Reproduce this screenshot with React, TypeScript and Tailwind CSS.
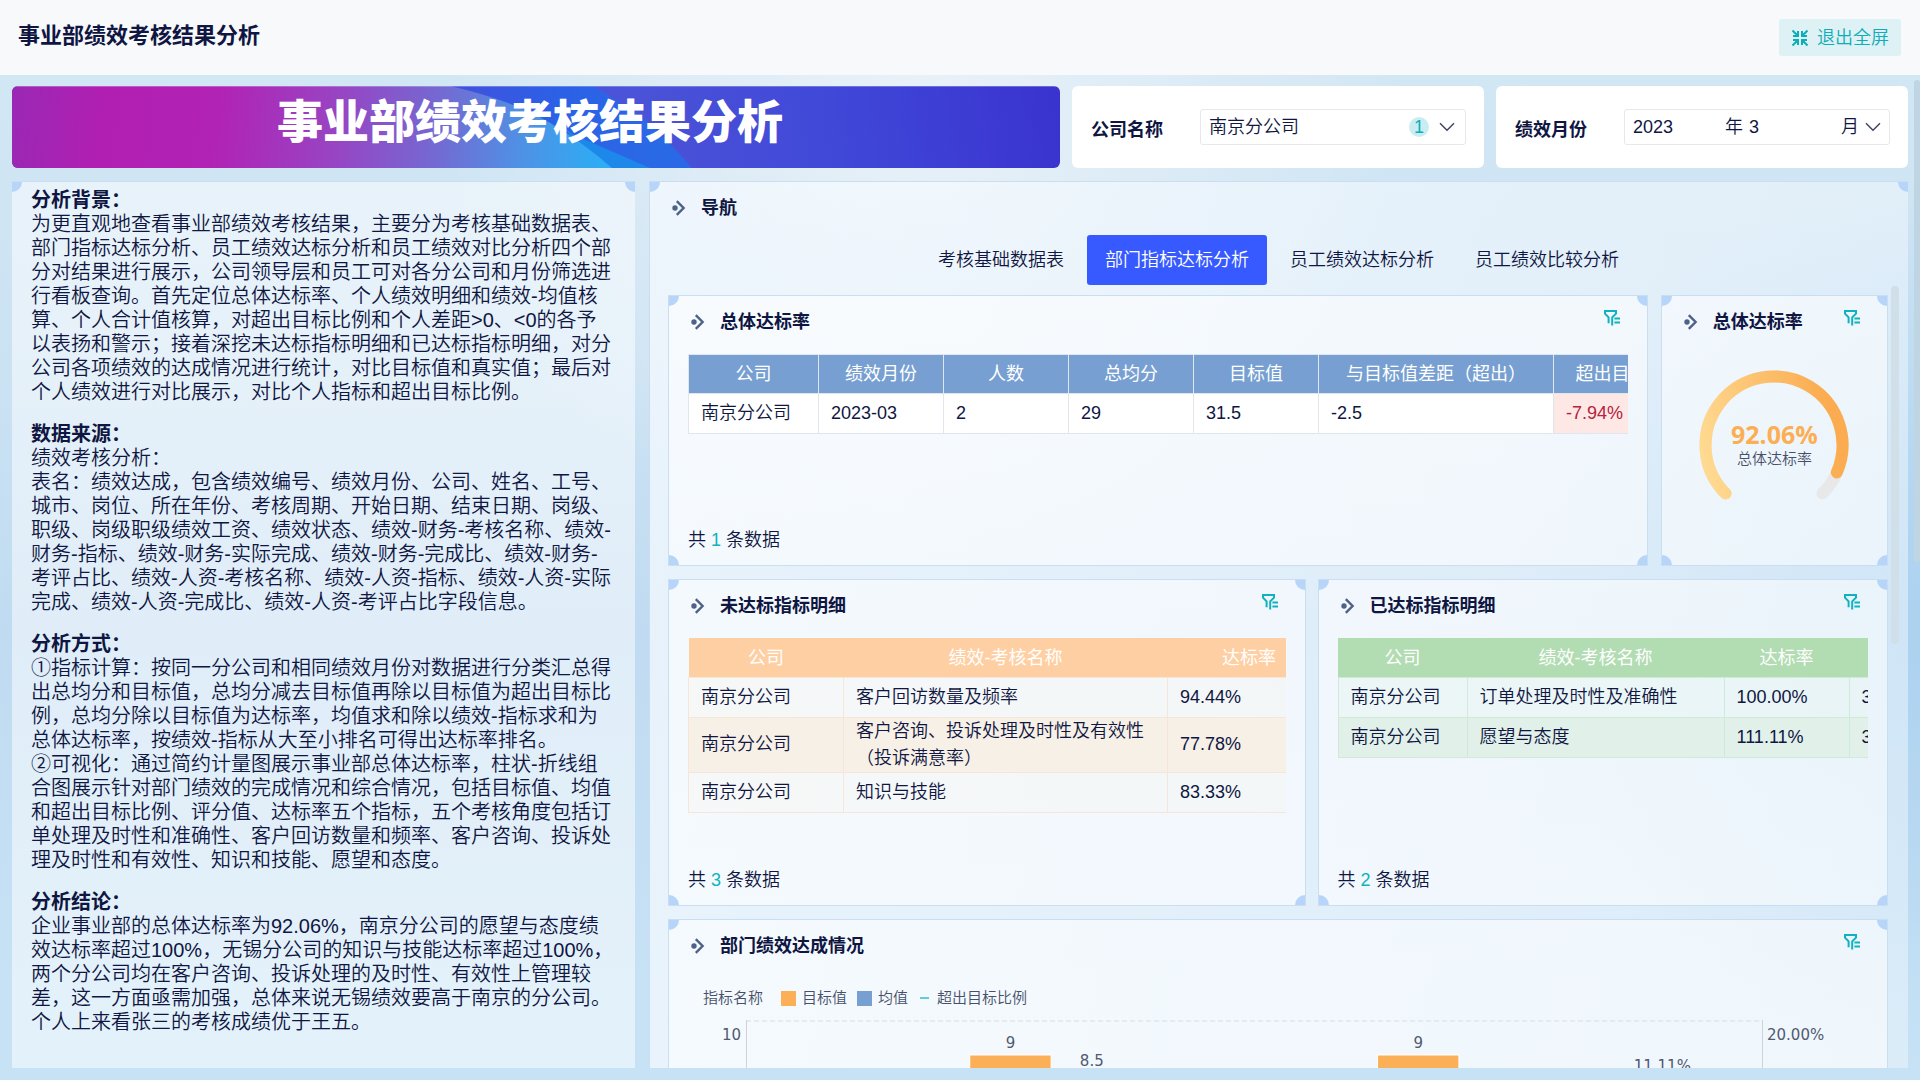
import type { ReactNode } from 'react'
import { clsx } from 'clsx'

interface CardProps {
  title?: string
  filter?: boolean
  className?: string
  children: ReactNode
}

interface ArticleSection {
  heading: string
  lines: string[]
}

const sections: ArticleSection[] = [
  {
    heading: '分析背景：',
    lines: [
      '为更直观地查看事业部绩效考核结果，主要分为考核基础数据表、部门指标达标分析、员工绩效达标分析和员工绩效对比分析四个部分对结果进行展示，公司领导层和员工可对各分公司和月份筛选进行看板查询。首先定位总体达标率、个人绩效明细和绩效-均值核算、个人合计值核算，对超出目标比例和个人差距>0、<0的各予以表扬和警示；接着深挖未达标指标明细和已达标指标明细，对分公司各项绩效的达成情况进行统计，对比目标值和真实值；最后对个人绩效进行对比展示，对比个人指标和超出目标比例。'
    ]
  },
  {
    heading: '数据来源：',
    lines: [
      '绩效考核分析：',
      '表名：绩效达成，包含绩效编号、绩效月份、公司、姓名、工号、城市、岗位、所在年份、考核周期、开始日期、结束日期、岗级、职级、岗级职级绩效工资、绩效状态、绩效-财务-考核名称、绩效-财务-指标、绩效-财务-实际完成、绩效-财务-完成比、绩效-财务-考评占比、绩效-人资-考核名称、绩效-人资-指标、绩效-人资-实际完成、绩效-人资-完成比、绩效-人资-考评占比字段信息。'
    ]
  },
  {
    heading: '分析方式：',
    lines: [
      '①指标计算：按同一分公司和相同绩效月份对数据进行分类汇总得出总均分和目标值，总均分减去目标值再除以目标值为超出目标比例，总均分除以目标值为达标率，均值求和除以绩效-指标求和为总体达标率，按绩效-指标从大至小排名可得出达标率排名。',
      '②可视化：通过简约计量图展示事业部总体达标率，柱状-折线组合图展示针对部门绩效的完成情况和综合情况，包括目标值、均值和超出目标比例、评分值、达标率五个指标，五个考核角度包括订单处理及时性和准确性、客户回访数量和频率、客户咨询、投诉处理及时性和有效性、知识和技能、愿望和态度。'
    ]
  },
  {
    heading: '分析结论：',
    lines: [
      '企业事业部的总体达标率为92.06%，南京分公司的愿望与态度绩效达标率超过100%，无锡分公司的知识与技能达标率超过100%，两个分公司均在客户咨询、投诉处理的及时性、有效性上管理较差，这一方面亟需加强，总体来说无锡绩效要高于南京的分公司。个人上来看张三的考核成绩优于王五。'
    ]
  }
]

const tabs = ['考核基础数据表', '部门指标达标分析', '员工绩效达标分析', '员工绩效比较分析']

function ExitIcon() {
  return (
    <svg className="h-[18px] w-[18px]" viewBox="0 0 18 18" fill="none" stroke="currentColor" strokeWidth="2">
      <path d="M1.5 1.5l4.5 4.5M2 7h5V2M16.5 1.5L12 6M11 2v5h5M1.5 16.5L6 12M2 11h5v5M16.5 16.5L12 12M11 16v-5h5" />
    </svg>
  )
}

function ArrowIcon() {
  return (
    <svg className="h-4 w-[14px] shrink-0" viewBox="0 0 14 16">
      <circle cx="3" cy="8" r="2.7" fill="#4e6288" />
      <path d="M4.8 1.2L11.6 8l-6.8 6.8" fill="none" stroke="#4e6288" strokeWidth="2.4" />
    </svg>
  )
}

function FilterIcon() {
  return (
    <svg className="h-4 w-4" viewBox="0 0 16 16" fill="none" stroke="#0fb2be" strokeWidth="2">
      <path d="M4.6 13.2V7.4L1 3.6V1h11v2.6L8.2 7.4V15.4" />
      <path d="M10.4 8.6H16M10.4 12.4H16" />
    </svg>
  )
}

function ChevronIcon() {
  return (
    <svg className="pointer-events-none h-[10px] w-4 shrink-0" viewBox="0 0 16 10" fill="none" stroke="#3b4160" strokeWidth="1.4">
      <path d="M1 1.2l7 7 7-7" />
    </svg>
  )
}

function Corners({ bottom = true }: { bottom?: boolean }) {
  return (
    <>
      <i className="absolute left-0 top-0 h-[10px] w-[10px] rounded-br-full bg-[#b7d5f8]" />
      <i className="absolute right-0 top-0 h-[10px] w-[10px] rounded-bl-full bg-[#b7d5f8]" />
      {bottom && (
        <>
          <i className="absolute bottom-0 left-0 h-[10px] w-[10px] rounded-tr-full bg-[#b7d5f8]" />
          <i className="absolute bottom-0 right-0 h-[10px] w-[10px] rounded-tl-full bg-[#b7d5f8]" />
        </>
      )}
    </>
  )
}

function Card({ title, filter = true, className, children }: CardProps) {
  return (
    <section className={clsx('relative flex min-w-0 flex-col border border-[#c9def3] bg-white/55 px-[19px]', className)}>
      <Corners />
      <div className="flex h-[52px] shrink-0 items-center gap-[15px] pl-[3px]">
        <ArrowIcon />
        <h3 className="text-lg font-bold">{title}</h3>
        {filter && (
          <button className="ml-auto mr-2 pb-2" aria-label="筛选">
            <FilterIcon />
          </button>
        )}
      </div>
      {children}
    </section>
  )
}

function Total({ count }: { count: number }) {
  return (
    <p className="mt-auto pb-3 text-lg leading-[26px]">
      共 <span className="text-[#0fb2be]">{count}</span> 条数据
    </p>
  )
}

interface DataTableProps {
  head: string[]
  widths: string[]
  rows: string[][]
  headClass: string
  cellClass: string
  stripeClass?: string
}

function DataTable({ head, widths, rows, headClass, cellClass, stripeClass }: DataTableProps) {
  return (
    <div className="mt-[6px] overflow-hidden">
      <table className="w-max table-fixed border-collapse text-lg leading-[27px]">
        <thead>
          <tr>
            {head.map((name, i) => (
              <th key={name} className={clsx('h-[39px] font-normal text-white', widths[i], headClass)}>
                {name}
              </th>
            ))}
          </tr>
        </thead>
        <tbody>
          {rows.map((row, r) => (
            <tr key={row[1]} className={clsx(r % 2 === 1 && stripeClass)}>
              {row.map((cell, i) => (
                <td
                  key={i}
                  className={clsx(
                    'h-10 border px-3',
                    cell === '-7.94%' ? 'border-[#e1e6ec] bg-[#fee8e6] text-[#b3233b]' : cellClass
                  )}
                >
                  {cell.split('\n').map(line => (
                    <span key={line} className="block whitespace-nowrap">{line}</span>
                  ))}
                </td>
              ))}
            </tr>
          ))}
        </tbody>
      </table>
    </div>
  )
}

function Gauge({ value, label }: { value: number; label: string }) {
  const r = 68.5
  const point = (deg: number) => {
    const a = (deg * Math.PI) / 180
    return `${75 + r * Math.cos(a)} ${75 + r * Math.sin(a)}`
  }
  const end = 135 + 2.7 * value

  return (
    <div className="relative mx-auto mt-[22px] h-[150px] w-[150px]">
      <svg viewBox="0 0 150 150" fill="none" strokeWidth="12" strokeLinecap="round">
        <defs>
          <linearGradient id="gauge" x1="0" y1="1" x2="1" y2="0.8">
            <stop offset="0" stopColor="#ffdc94" />
            <stop offset="1" stopColor="#fbac50" />
          </linearGradient>
        </defs>
        <path d={`M${point(135)}A${r} ${r} 0 1 1 ${point(405)}`} stroke="#e8e8e8" />
        <path d={`M${point(135)}A${r} ${r} 0 1 1 ${point(end)}`} stroke="url(#gauge)" />
      </svg>
      <div className="absolute inset-0 flex flex-col items-center pt-[50px]">
        <strong className="font-['Open_Sans',sans-serif] text-[25px] font-bold leading-7 text-[#fcae55]">{value}%</strong>
        <span className="text-[15px] leading-[22px] text-[#47506a]">{label}</span>
      </div>
    </div>
  )
}

function Chart() {
  return (
    <div className="flex h-[300px] pl-[2px] pr-[19px] font-['DejaVu_Sans','Noto_Sans_CJK_SC',sans-serif] text-[15px] font-normal text-[#515970]">
      <span className="w-14 pr-[5px] pt-1 text-right">10</span>
      <svg className="h-full min-w-0 flex-1" fill="#515970" textAnchor="middle">
        <line x1="0" x2="100%" y1="1" y2="1" stroke="#d9dde2" strokeWidth="1" strokeDasharray="5 3" />
        <line x1="0" x2="0" y1="0" y2="100%" stroke="#cfd3d9" strokeWidth="2" />
        <line x1="100%" x2="100%" y1="0" y2="100%" stroke="#cfd3d9" strokeWidth="2" />
        <rect x="22%" y="35" width="8%" height="265" fill="#fbaf57" stroke="#fff" />
        <rect x="62.1%" y="35" width="8%" height="265" fill="#fbaf57" stroke="#fff" />
        <text x="26%" y="28">9</text>
        <text x="34%" y="46">8.5</text>
        <text x="66.1%" y="28">9</text>
        <text x="90.1%" y="51">11.11%</text>
      </svg>
      <span className="w-[86px] pl-1 pt-1">20.00%</span>
    </div>
  )
}

function Banner() {
  return (
    <div className="relative min-w-0 overflow-hidden rounded-md">
      <svg className="absolute inset-0 h-full w-full" viewBox="0 0 1048 82" preserveAspectRatio="none">
        <defs>
          <linearGradient id="base" gradientUnits="userSpaceOnUse" x1="480" y1="82" x2="1048" y2="0">
            <stop offset="0" stopColor="#4557d8" />
            <stop offset="0.25" stopColor="#4b53d8" />
            <stop offset="0.6" stopColor="#4048d8" />
            <stop offset="1" stopColor="#3a33cf" />
          </linearGradient>
          <linearGradient id="glow" gradientUnits="userSpaceOnUse" x1="0" y1="0" x2="590" y2="60">
            <stop offset="0" stopColor="#9a28b4" />
            <stop offset="0.16" stopColor="#b11fb2" />
            <stop offset="0.35" stopColor="#b123b4" />
            <stop offset="0.55" stopColor="#9844c3" />
            <stop offset="0.72" stopColor="#7469d2" />
            <stop offset="0.86" stopColor="#5090e4" />
            <stop offset="1" stopColor="#2eacf4" />
          </linearGradient>
          <linearGradient id="band" gradientUnits="userSpaceOnUse" x1="438" y1="0" x2="640" y2="60">
            <stop offset="0" stopColor="#4350dc" />
            <stop offset="0.5" stopColor="#2c60e6" />
            <stop offset="1" stopColor="#2a69e6" />
          </linearGradient>
        </defs>
        <rect width="1048" height="82" fill="url(#base)" />
        <path d="M438 0H581L622 25Q650 47 680 82H590Z" fill="url(#band)" />
        <path d="M540 30L560 48L638 82L735 82H590Z" fill="#1e88ea" />
        <path d="M0 0H438Q500 14 540 38Q570 56 600 82H0Z" fill="url(#glow)" />
        <path d="M0 0.5H1048" stroke="#fff" strokeOpacity="0.25" />
      </svg>
      <h2 className="relative truncate pr-3 pt-[5px] text-center text-[46px] font-black leading-[62px] text-white">
        事业部绩效考核结果分析
      </h2>
    </div>
  )
}

function Filters() {
  return (
    <>
      <div className="flex min-w-0 items-center rounded-md bg-white pl-[19px] pr-[18px]">
        <label htmlFor="company" className="w-[109px] shrink-0 pt-[6px] text-lg font-bold">公司名称</label>
        <div className="relative flex h-9 min-w-0 flex-1 items-center rounded-[3px] border border-[#e6e8ec] pr-[10px]">
          <select id="company" className="h-full w-full appearance-none bg-transparent pl-2 text-lg outline-none">
            <option>南京分公司</option>
          </select>
          <span className="mr-[10px] flex h-5 w-5 shrink-0 items-center justify-center rounded-full bg-[#c9edf0] text-lg leading-5 text-[#0fadb9]">
            1
          </span>
          <ChevronIcon />
        </div>
      </div>
      <div className="flex min-w-0 items-center rounded-md bg-white pl-[19px] pr-[18px]">
        <label htmlFor="year" className="w-[109px] shrink-0 pt-[6px] text-lg font-bold">绩效月份</label>
        <div className="flex h-9 min-w-0 flex-1 items-center rounded-[3px] border border-[#e6e8ec] px-2 text-lg">
          <input id="year" defaultValue="2023" className="w-0 flex-1 bg-transparent outline-none" />
          <span>年</span>
          <input aria-label="月" defaultValue="3" className="w-0 flex-1 bg-transparent pl-[6px] outline-none" />
          <span className="mr-[6px]">月</span>
          <ChevronIcon />
        </div>
      </div>
    </>
  )
}

export default function App() {
  return (
    <div className="flex h-screen flex-col overflow-hidden font-['Liberation_Sans','Noto_Sans_CJK_SC',sans-serif] font-[350] text-[#0f1642]">
      <header className="flex h-[75px] shrink-0 items-start justify-between bg-[#f8f9fb] pl-[18px] pr-[19px] pt-[19px]">
        <h1 className="text-[22px] font-bold leading-[34px]">事业部绩效考核结果分析</h1>
        <button className="flex h-[37px] items-center gap-2 rounded-[3px] bg-[#def1f4] px-3 text-lg text-[#0fadb9]">
          <ExitIcon />
          退出全屏
        </button>
      </header>

      <main className="relative flex min-h-0 flex-1 flex-col gap-[13px] bg-[radial-gradient(circle_at_48%_2%,#e9f1f8_0%,transparent_34%),radial-gradient(circle_at_100%_55%,#acd2f0_0%,transparent_22%),linear-gradient(180deg,#d2e7f4_0%,#cbe2f3_30%,#c0dbf1_55%,#c7e2f5_90%)] px-3 pb-3 pt-[11px]">
        <span className="absolute right-0 top-[5px] h-[48%] w-[6px] rounded bg-[#bfd5e4]" />
        <div className="grid min-h-[82px] grid-cols-[1048fr_412fr_412fr] gap-3">
          <Banner />
          <Filters />
        </div>

        <div className="grid min-h-0 flex-1 grid-cols-[623fr_1259fr] gap-[14px]">
          <article className="relative overflow-hidden border-t border-[#c9def3] bg-white/50 pl-[19px] pr-5 pt-[6px] text-xl leading-6">
            <Corners bottom={false} />
            {sections.map(section => (
              <section key={section.heading} className="mb-[18px]">
                <h3 className="font-bold">{section.heading}</h3>
                {section.lines.map(line => (
                  <p key={line}>{line}</p>
                ))}
              </section>
            ))}
          </article>

          <section className="relative flex min-w-0 flex-col overflow-hidden border-l border-t border-[#c9def3] bg-[linear-gradient(100deg,rgb(245_250_255/0.75),rgb(240_247_253/0.5))] pl-[18px]">
            <Corners bottom={false} />
            <div className="flex h-[53px] shrink-0 items-center gap-[15px] pb-[2px] pl-1">
              <ArrowIcon />
              <h3 className="text-lg font-bold">导航</h3>
            </div>
            <nav className="mr-[19px] flex shrink-0 justify-center gap-[5px]">
              {tabs.map((tab, i) => (
                <button
                  key={tab}
                  className={clsx('h-[50px] rounded-[3px] px-[18px] text-lg', i === 1 && 'bg-[#365aff] text-white')}
                >
                  {tab}
                </button>
              ))}
            </nav>

            <div className="relative mt-[10px] min-h-0 flex-1">
              <span className="absolute -top-[9px] right-[9px] h-[358px] w-2 rounded bg-[#d1dfe9]" />
              <div className="mr-5 h-full overflow-y-auto [scrollbar-width:none]">
                <div className="grid grid-cols-[979fr_227fr] gap-[13px]">
                  <Card title="总体达标率" className="h-[271px]">
                    <DataTable
                      head={['公司', '绩效月份', '人数', '总均分', '目标值', '与目标值差距（超出）', '超出目标比例']}
                      widths={['w-[130px]', 'w-[125px]', 'w-[125px]', 'w-[125px]', 'w-[125px]', 'w-[235px]', 'w-[152px]']}
                      rows={[['南京分公司', '2023-03', '2', '29', '31.5', '-2.5', '-7.94%']]}
                      headClass="border border-[#dfe6ee] bg-[#779fd1]"
                      cellClass="border-[#e1e6ec] bg-white"
                    />
                    <Total count={1} />
                  </Card>
                  <Card title="总体达标率">
                    <Gauge value={92.06} label="总体达标率" />
                  </Card>
                </div>

                <div className="mt-[13px] grid grid-cols-[637fr_570fr] gap-3">
                  <Card title="未达标指标明细" className="h-[327px]">
                    <DataTable
                      head={['公司', '绩效-考核名称', '达标率']}
                      widths={['w-[155px]', 'w-[324px]', 'w-[163px]']}
                      rows={[
                        ['南京分公司', '客户回访数量及频率', '94.44%'],
                        ['南京分公司', '客户咨询、投诉处理及时性及有效性\n（投诉满意率）', '77.78%'],
                        ['南京分公司', '知识与技能', '83.33%']
                      ]}
                      headClass="bg-[#ffcfa4] pt-[3px]"
                      cellClass="border-[#f6e5d8] bg-[#fff4e8]/20"
                      stripeClass="bg-[#f6efe8]"
                    />
                    <Total count={3} />
                  </Card>
                  <Card title="已达标指标明细">
                    <DataTable
                      head={['公司', '绩效-考核名称', '达标率', '']}
                      widths={['w-[129px]', 'w-[257px]', 'w-[125px]', 'w-[125px]']}
                      rows={[
                        ['南京分公司', '订单处理及时性及准确性', '100.00%', '3'],
                        ['南京分公司', '愿望与态度', '111.11%', '3']
                      ]}
                      headClass="bg-[#b2dcb2] pt-[3px]"
                      cellClass="border-[#d0ead8] bg-[#e6f6ea]/30"
                      stripeClass="bg-[#e0f0ea]"
                    />
                    <Total count={2} />
                  </Card>
                </div>

                <Card title="部门绩效达成情况" className="mt-[13px]">
                  <div className="flex h-12 items-center pl-[15px] pt-1 text-[15px] text-[#47506a]">
                    <span className="mr-[18px]">指标名称</span>
                    <i className="mr-[6px] h-[15px] w-[15px] bg-[#fbaf57]" />
                    <span className="mr-[10px]">目标值</span>
                    <i className="mr-[6px] h-[15px] w-[15px] bg-[#779fd1]" />
                    <span className="mr-3">均值</span>
                    <i className="mr-2 h-[2px] w-[9px] bg-[#61cdd8]" />
                    <span>超出目标比例</span>
                  </div>
                  <Chart />
                </Card>
              </div>
            </div>
          </section>
        </div>
      </main>
    </div>
  )
}
